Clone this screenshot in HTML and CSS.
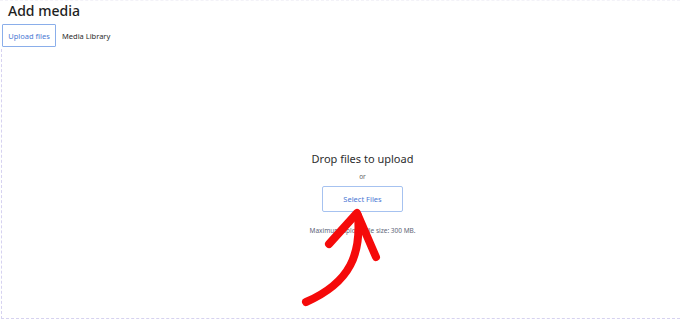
FILE: index.html
```html
<!DOCTYPE html>
<html>
<head>
<meta charset="utf-8">
<link rel="stylesheet" href="styles.css">
</head>
<body>
<div class="page">
  <div class="topline"></div>
  <h1 class="title">Add media</h1>
  <div class="tabs">
    <button class="tab active">Upload files</button>
    <span class="tab">Media Library</span>
  </div>
  <div class="dropzone">
    <div class="inner">
      <p class="drop">Drop files to upload</p>
      <p class="or">or</p>
      <button class="select">Select Files</button>
      <p class="max">Maximum upload file size: 300 MB.</p>
    </div>
  </div>
  <svg class="arrow" width="680" height="321" viewBox="0 0 680 321">
    <path d="M358 216 C361 252 352 282 306 302" fill="none" stroke="#f50a0a" stroke-width="8" stroke-linecap="round"/>
    <path d="M329 244 L357 213 L376 257" fill="none" stroke="#f50a0a" stroke-width="8" stroke-linecap="round" stroke-linejoin="round"/>
  </svg>
</div>
</body>
</html>
```
FILE: styles.css
```css
html, body {
  margin: 0;
  padding: 0;
  background: #fff;
}
.page {
  position: relative;
  width: 680px;
  height: 321px;
  overflow: hidden;
  font-family: "Noto Sans", "Open Sans", sans-serif;
  display: flex;
  flex-direction: column;
}
.topline {
  height: 0;
  border-top: 1px dashed #f3f2f8;
}
.title {
  margin: 0;
  padding: 0 0 0 8px;
  font-size: 14px;
  font-weight: 500;
  line-height: 20px;
  color: #1e1e1e;
  height: 23px;
}
.tabs {
  display: flex;
  align-items: center;
  gap: 6px;
  padding-left: 2px;
  height: 23px;
}
.tab {
  font-family: inherit;
  font-size: 7.5px;
  color: #2c2c2c;
  background: none;
  border: none;
  padding: 0;
}
.tab.active {
  color: #4a78d4;
  border: 1px solid #8aaeea;
  border-radius: 1px;
  height: 23px;
  width: 54px;
  padding: 0;
}
.dropzone {
  flex: 1;
  margin-top: 2px;
  margin-bottom: 2px;
  border-left: 1px dashed #d6d2f0;
  border-bottom: 1px dashed #d6d2f0;
  margin-left: 1px;
  display: flex;
  justify-content: center;
}
.inner {
  display: flex;
  flex-direction: column;
  align-items: center;
  padding-top: 102px;
  margin-left: 43px;
}
.inner p {
  margin: 0;
}
.drop {
  font-size: 11px;
  color: #2d2d2d;
  line-height: 16px;
}
.or {
  font-size: 6.5px;
  color: #666;
  line-height: 10px;
  margin-top: 5px !important;
}
.select {
  margin-top: 4px;
  width: 81px;
  height: 26px;
  border: 1px solid #a6c2f0;
  border-radius: 2px;
  background: #fff;
  color: #4a78d4;
  font-family: inherit;
  font-size: 7.5px;
  padding: 0;
}
.max {
  margin-top: 14px !important;
  font-size: 6.5px;
  color: #5e6678;
  line-height: 10px;
}
.arrow {
  position: absolute;
  left: 0;
  top: 0;
  pointer-events: none;
}
```
